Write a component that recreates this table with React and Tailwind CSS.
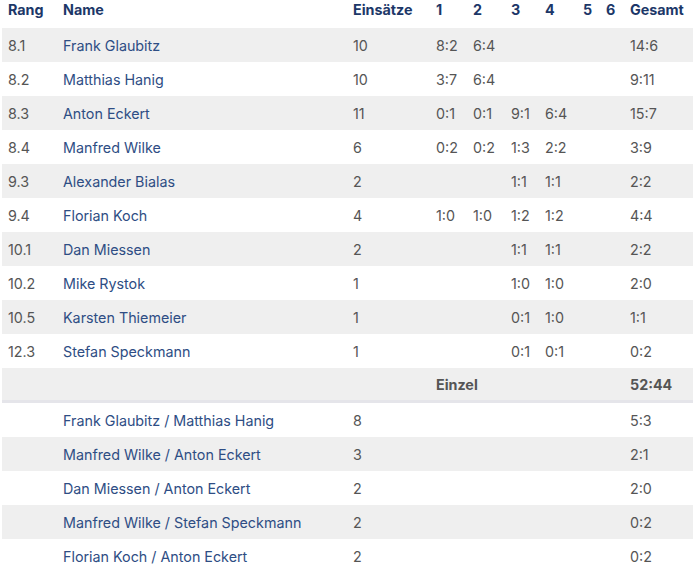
import React from 'react';

const singles = [
    ['8.1', 'Frank Glaubitz', '10', ['8:2', '6:4', '', '', '', ''], '14:6'],
    ['8.2', 'Matthias Hanig', '10', ['3:7', '6:4', '', '', '', ''], '9:11'],
    ['8.3', 'Anton Eckert', '11', ['0:1', '0:1', '9:1', '6:4', '', ''], '15:7'],
    ['8.4', 'Manfred Wilke', '6', ['0:2', '0:2', '1:3', '2:2', '', ''], '3:9'],
    ['9.3', 'Alexander Bialas', '2', ['', '', '1:1', '1:1', '', ''], '2:2'],
    ['9.4', 'Florian Koch', '4', ['1:0', '1:0', '1:2', '1:2', '', ''], '4:4'],
    ['10.1', 'Dan Miessen', '2', ['', '', '1:1', '1:1', '', ''], '2:2'],
    ['10.2', 'Mike Rystok', '1', ['', '', '1:0', '1:0', '', ''], '2:0'],
    ['10.5', 'Karsten Thiemeier', '1', ['', '', '0:1', '1:0', '', ''], '1:1'],
    ['12.3', 'Stefan Speckmann', '1', ['', '', '0:1', '0:1', '', ''], '0:2'],
];

const doubles = [
    ['Frank Glaubitz / Matthias Hanig', '8', '5:3'],
    ['Manfred Wilke / Anton Eckert', '3', '2:1'],
    ['Dan Miessen / Anton Eckert', '2', '2:0'],
    ['Manfred Wilke / Stefan Speckmann', '2', '0:2'],
    ['Florian Koch / Anton Eckert', '2', '0:2'],
];

// column widths, left to right
const W = ['w-[55px]', 'w-[290px]', 'w-[83px]', 'w-[37px]', 'w-[38px]', 'w-[34px]', 'w-[38px]', 'w-[23px]', 'w-[24px]', 'w-[69px]'];

const Cell = ({ i, className = '', children }) => (
    <div className={`${W[i]} shrink-0 pl-[6px] whitespace-nowrap ${className}`}>{children}</div>
);

export default function App() {
    return (
        <div className="w-[695px] h-[570px] overflow-hidden bg-white text-[14.3px]" style={{ fontFamily: 'Inter, "Noto Sans", sans-serif' }}>
            <div className="ml-[2px] w-[691px]">

                {/* ── Header ── */}
                <div className="flex h-[28px] items-start text-[#1c3768] font-bold leading-[19px]">
                    {['Rang', 'Name', 'Einsätze', '1', '2', '3', '4', '5', '6', 'Gesamt'].map((h, i) => (
                        <Cell key={h} i={i}>{h}</Cell>
                    ))}
                </div>

                {/* ── Einzel ── */}
                {singles.map((r, n) => (
                    <div key={r[0]} className={`flex h-[34px] items-center pt-[2px] text-[#555] ${n % 2 === 0 ? 'bg-[#efefef]' : 'bg-white'}`}>
                        <Cell i={0}>{r[0]}</Cell>
                        <Cell i={1} className="text-[#2e4d84]">{r[1]}</Cell>
                        <Cell i={2}>{r[2]}</Cell>
                        {r[3].map((v, k) => (
                            <Cell key={k} i={k + 3}>{v}</Cell>
                        ))}
                        <Cell i={9}>{r[4]}</Cell>
                    </div>
                ))}

                {/* ── Summe Einzel ── */}
                <div className="flex h-[35px] items-center pt-[1px] bg-[#efefef] border-b-[3px] border-[#e5e5ea] text-[#555] font-bold">
                    <Cell i={0} />
                    <Cell i={1} />
                    <Cell i={2} />
                    <div className="w-[194px] shrink-0 pl-[6px]">Einzel</div>
                    <Cell i={9}>52:44</Cell>
                </div>

                {/* ── Doppel ── */}
                {doubles.map((r, n) => (
                    <div key={r[0]} className={`flex h-[34px] items-center pt-[2px] text-[#555] ${n % 2 === 1 ? 'bg-[#efefef]' : 'bg-white'}`}>
                        <Cell i={0} />
                        <Cell i={1} className="text-[#2e4d84]">{r[0]}</Cell>
                        <Cell i={2}>{r[1]}</Cell>
                        <div className="w-[194px] shrink-0" />
                        <Cell i={9}>{r[2]}</Cell>
                    </div>
                ))}
            </div>
        </div>
    );
}
